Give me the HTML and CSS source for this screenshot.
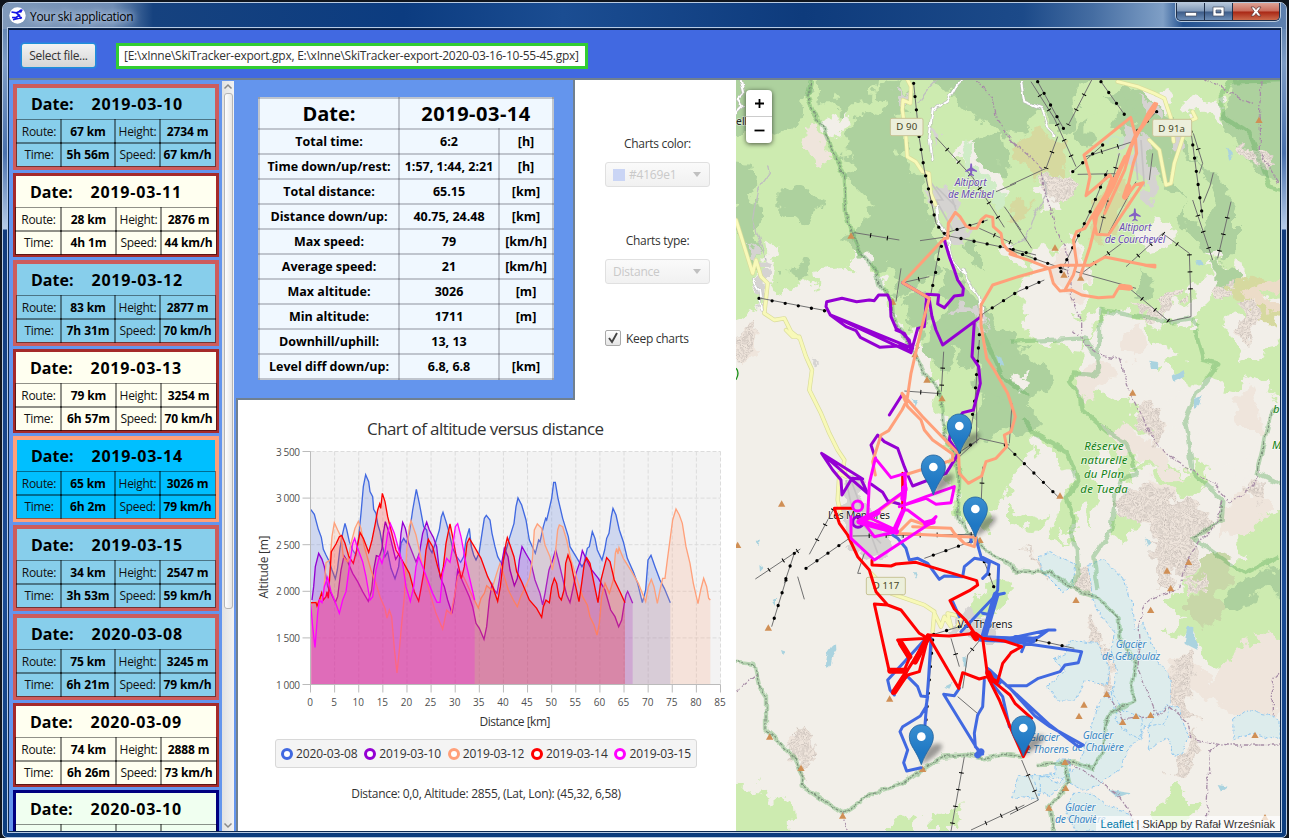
FILE: index.html
```html
<!DOCTYPE html>
<html lang="en">
<head>
<meta charset="utf-8">
<title>Your ski application</title>
<link rel="stylesheet" href="styles.css">
</head>
<body>
<div class="window">
  <header class="titlebar">
    <svg class="app-icon" width="17" height="17" viewBox="0 0 17 17"><circle cx="8.5" cy="8.500" r="8.200" fill="#fff"/><path d="M11 3.500l2.500-.5M2.500 5l5 .8 3.300-1.600M7.500 6l2.800 2.300-3.500 2.400M4 12.800l9-2.300M3 10.500l4 .2M9.500 8.300l3 3.500" stroke="#1414e6" stroke-width="1.700" fill="none"/><circle cx="11.400" cy="4.200" r="1.500" fill="#1414e6"/></svg>
    <span class="title">Your ski application</span>
    <div class="caption-buttons">
      <span class="cap"><svg width="12" height="12"><rect x="0.500" y="6.500" width="11" height="3.500" fill="#fff" stroke="#444c60" stroke-width=".7"/></svg></span>
      <span class="cap"><svg width="13" height="12"><path d="M1 1h11v9H1zM4 4v3h5V4z" fill="#fff" fill-rule="evenodd" stroke="#444c60" stroke-width=".7"/></svg></span>
      <span class="cap cap-close"><svg width="12" height="12"><path d="M1 1h3l2 2.600L8 1h3L7.800 5.500 11 10H8L6 7.400 4 10H1l3.200-4.500z" fill="#fff" stroke="#5a3030" stroke-width=".7"/></svg></span>
    </div>
  </header>
  <div class="client">
    <div class="toolbar">
      <button class="select-file">Select file...</button>
      <div class="path-field">[E:\xInne\SkiTracker-export.gpx, E:\xInne\SkiTracker-export-2020-03-16-10-55-45.gpx]</div>
    </div>
    <div class="body">
      <aside class="sidebar">
        <div class="cards" id="cards"></div>
        <div class="scrollbar">
          <svg width="12" height="11"><path d="M2.500 7.500L6 4l3.500 3.500" fill="none" stroke="#8a8a8a" stroke-width="1.500"/></svg>
          <div class="thumb"></div>
          <svg class="down" width="12" height="11"><path d="M2.500 3.500L6 7l3.500-3.500" fill="none" stroke="#8a8a8a" stroke-width="1.500"/></svg>
        </div>
      </aside>
      <main class="center">
        <div class="upper">
          <section class="summary"><table class="stats" id="stats"></table></section>
          <section class="controls">
            <label>Charts color:</label>
            <div class="combo"><i class="swatch"></i><span>#4169e1</span><b class="arrow"></b></div>
            <label>Charts type:</label>
            <div class="combo"><span>Distance</span><b class="arrow"></b></div>
            <div class="check"><span class="box"><svg width="12" height="12"><path d="M2 6l3 4 5-9" stroke="#444" stroke-width="1.900" fill="none"/></svg></span>Keep charts</div>
          </section>
        </div>
        <section class="chart-panel">
          <svg class="chart" id="chart" width="498" height="335" viewBox="238 400 498 335"></svg>
          <div class="legend" id="legend"></div>
          <div class="readout">Distance: 0,0, Altitude: 2855, (Lat, Lon): (45,32, 6,58)</div>
        </section>
      </main>
      <section class="map">
<svg class="map-canvas" width="544" height="751" viewBox="0 0 1632 2253">
<defs>
<pattern id="scree" width="22" height="20" patternUnits="userSpaceOnUse"><path d="M2 4l5-2M11 3l4 4M5 10l-3 5M9 12l6-1M18 9l2 6M13 17l5 1M7 18l2-3" fill="none" stroke="#bdb4ae" stroke-width="3"/></pattern>
<linearGradient id="pin" x1="0" y1="0" x2="0" y2="1"><stop offset="0" stop-color="#3a8fd0"/><stop offset=".7" stop-color="#1f78c4"/></linearGradient>
<filter id="soft" x="-30%" y="-30%" width="160%" height="160%"><feGaussianBlur stdDeviation="6"/></filter>
<filter id="organic" filterUnits="userSpaceOnUse" x="-60" y="-60" width="1752" height="2373"><feTurbulence type="fractalNoise" baseFrequency=".018" numOctaves="4" seed="7"/><feDisplacementMap in="SourceGraphic" scale="85" xChannelSelector="R" yChannelSelector="G"/></filter>
<filter id="wobble" filterUnits="userSpaceOnUse" x="-60" y="-60" width="1752" height="2373"><feTurbulence type="fractalNoise" baseFrequency=".03" numOctaves="2" seed="3"/><feDisplacementMap in="SourceGraphic" scale="20" xChannelSelector="R" yChannelSelector="G"/></filter>
<g id="marker"><path d="M0 0L12-42Q40-72 62-60Q66-38 0 0" fill="#333" opacity=".45" filter="url(#soft)"/><path d="M0 0C-16-46-36-56-36-84C-36-104-20-120 0-120S36-104 36-84C36-56 16-46 0 0z" fill="url(#pin)" stroke="#23649f" stroke-width="2.500"/><circle cy="-84" r="13" fill="#fff"/></g>
<path id="peak" d="M-11 9L0-10 11 9z" fill="#d08f55"/>
<path id="plane" d="M-2-16Q0-20 3-16L4-5 18 4v4L4 4 3 13l6 5v3l-8-3-8 3v-3l5-5-1-9-14 4V4L-3-5z" fill="#8461c4"/>
</defs>
<rect width="1632" height="2253" fill="#f2efe9"/>

<g filter="url(#organic)">
<!-- meadows -->
<g fill="#cdebb0">
<path d="M-50-50H1690V640L1610 650 1560 720 1480 700 1440 760 1370 720 1350 760 1310 700 1230 720 1110 700 1060 780 1020 860 1040 930 1130 900 1160 960 1200 1010 1240 1060 1180 1080 1200 1200 1150 1210 1110 1090 1060 1150 1090 1250 1060 1370 1050 1250 1010 1230 1000 1170 960 1140 950 1100 900 1090 850 1170 760 1330 690 1340 650 1250 640 1120 600 960 580 850 620 800 560 780 500 760 470 720 460 640 400 530 380 480 350 490 355 560 240 575 245 620 210 600 165 625 120 640 105 600 120 500 90 480 95 540 50 600 70 690 -50 730z"/>
<path d="M1230 720l150 30 30-40 70 40 30 80 60 20 20-60 100-10v240l-128-40 30 50-60 10-40-80-60 40-10-70-100-30-50-50 60-20-70-30z"/>
<path d="M1250 1120l100 60 60-40 10 60-60 60-90-20-10-70-80-10zM1000 1210l60-50 20 60-70 60 10 80-40-20 30 60-70-20zM1130 1330l70-50 10 60-60 60zM1500 1350l120-60 72 10v260l-150-80-40-60zM822 1280l60 30 60-20-40 60-80-20z"/>
<path d="M1290 1560l60-50 60-60 282-20v290l-110-30-10 90-60 20-30 60-20-50 40-40-80-20-40-70-100-30 60-30z"/>
<path d="M-50 2110l110 10 40 50 60-10 10 150H-50zM450 2240l40-30 50-10-10 110h-80zM590 2180l50 10 50-20-30 80h-70zM1290 2120l30-20 30 50 40 10-40 93h-80zM710 1560l60-60 30-10 40 50-60 60-80 20z"/>
</g>

<!-- bare rock and clearings -->
<g fill="#f2efe9">
<path d="M265 120l60-35 10 25-30 50-30 10-15-30zM1190 35l60-15 60 20-10 60-80-20-30 10zM640 210l40-30 80 60 50 80-10 30-60-50-60-50zM890 330l40-30 50 80-60 10zM880 560l40-60 50 20 40-50 30 60 30 120-80 60-80 20-60-60zM850 690l110 0 120 30-40 90-130-20-70-50zM790 510l60-10 20 50-60-10zM1210 470l50-50 60 20-20 60-60 10zM1270 700l90-40 60-100 50 10-30 80-100 90zM1430 430l30 80-10 40-30-20zM1480 560l30-20 20 60-70 30zM1300 950l90-50 110 30 90-50 40 120-60 80-30 120-110-60-50-80zM1110 880l100-40 60 20-40 120-110-20-40-50zM820 870l50-20 10 40-40 10zM1230 1060l70-20 60 60-30 20zM1340 60l60-20 60 30-10 60-60-30-50-10zM1480 40l60 30-30 40z"/>
</g>
<g fill="#efe5dc">
<path d="M200 160l50-20 20 60 20 30-60 15-15-40zM960 520l60-20 20 60 20 80-50 20-50-50-30-20zM1160 760l60-20 20 50-50 50-40-30zM1010 890l60-40 60 10-30 80-60 10zM1100 1040l70-20 50 60 60 20 20 60 60 30-60 10-80-60-60-20zM1490 960l60-30 20 60 0 60-60 0zM1240 1200l60 10 30 70-60 50-40-60zM1460 1270l60-10 50-40 40 60-60 60-90 40zM1290 1740l60 0 80 60 60-80 90-70 92 30v200l-110 40-80-20-90-40zM-20 800l60-60 20 30-10 60-50 20z"/>
</g>

<!-- woods -->
<g fill="#add19e">
<path d="M20-40h205l-15 130-40 50-60 20-60-10L-40 185V50zM240-40h185l-5 95-60 15-40 25-30-25-45 0zM430 20l70-20 10 90-60 50zM325 145l80-60 80 20 20 80-10 40 60 70 20 70 10 100 30 60-20 60-95 60-45-70-60-30-60-60 30-40 5-40 60-30-40-25-60-60 10-35z"/>
<path d="M545-40h560l-90 100 10 120 30 20 30-60 60-100 80-20 60 60 30 50 60 90 80 70 20 120-60-10-80-110-60-20-70-80 0-70-60-40-60 20-80 60-50-20-60-40-40 60-60-10-60-20-60-60-60-60-60-30-50 0z"/>
<path d="M130 330l50-10 75 30-10 50-55 30-40-30-20-20zM-30 240l90 5-15 80 25 75-10 70 15 70-25 40-25-80-25-60zM175 565l40-10 5 30-30 20zM120 585l20 0-5 15zM700 200l100-60 10 140-40 0zM610 560l50 10 90 110 30 60 100 60-30 30 10 160-50 60-60 30-60-70-60-140-60-60 20-60 40-80zM500 650l60-20 20 90-20 70-40-30zM680 500l40-5 20 30 30-5-10 30-70 10z"/>
<path d="M1500-40h180v390l-108-60-60-90-60-70zM1110 40l70 20 30 90 60-10 60 90 120 60 50 110 0 100-40 40-50-30-80-60 20-80-70-70-60-60-80-90zM1420 560l60-20 30 60-30 30-60-30z"/>
<path d="M822 820l60 20 60 20 20 60-60 10-10 50-68 20-60-60-40-80 20-60zM640 760l40-20 30 50 0 80-60-50zM1450 1590l30-70 90-40 112-30v90l-90 0-50 30zM1200 645l20-90 40 60-20 40zM822 1000l60-20 40 40-50 40-50 10z"/>
</g>
<g fill="#cdebb0"><path d="M620 290l30-20 60 30 80 60 30 70-40 60-90-50-60-70zM1090 60l60 20-20 90-70-10 0-50zM640 800l40 60 30-10 20 110-30 120-60-20-10-120zM720 470l60 50 0 40-60-30zM1330 200l60 40 40 90-20 130-50-60-40-100z"/></g>
<g fill="#f2efe9"><path d="M823 880l50-6 6 30-40 14z"/></g>
<g fill="#d6d99f"><path d="M830 195l40-35 60 5 60 30-20 90-60 0-80-30zM1080 350l70-60 30 60-80 140-40-30 20-60zM1490 600l50-20 60 30-60 30 90 60-20 60-90-80zM840 380l40 0-20 60-60-20z"/></g>
<g fill="#c8d7a8"><path d="M1400 1440l80-20 20 70-90 60-40-20zM1350 1560l60-40 60 70-60 60-60-40z"/></g>
<g fill="#ecdcc8"><path d="M1530 625l60-25 72 10v20l-90 10 60 40v20l-90-40z"/></g>
<path d="M1050 200l70-20 60 10 0-20-60 0z" fill="#c7e6c2"/><path d="M690 180l20 70 90 90-10 60-90-120-35-60z" fill="#cfecc6"/>

<!-- settlements -->
<g fill="#d5d3d1"><path d="M575 310l60 20 30 60 30 60 0 50-30-20-20-60-60-60zM590 130l20 40-20 40zM495 30l15 40-20-20zM45 480l30 60 30 10-20 30-40-60zM60 570l25 20-10 100-20-60zM1190 150l50 20 20 120-10 100-30-50-20-90-60-60zM1210 45l60 20 20 60-60-30zM1290 150l60-20-20 90-40 0zM640 670l80 10 40 70-60-50zM325 1200l60 10 20 120 60 60-40 60-70-40-40-100zM620 1640l80-50 90 40-20 70-60-20zM230 835l15 20-20-5z"/></g>

<!-- scree -->
<g id="scree-fields"></g>
</g>
<path d="M580 300l40 60-20 0 50 90M600 320l60 60M640 330l20 60M1195 180l10 120M1215 180l10 140M330 1200l30 140M345 1200l80 220M375 1330l60 60" stroke="#c5c3c3" stroke-width="5" fill="none"/>

<!-- glaciers and lakes -->
<g fill="#ddecec" stroke="#92c8ef" stroke-width="3" stroke-dasharray="10 6" filter="url(#wobble)">
<path d="M910 1430l30-10 80 35-10 60-30 20-60-60zM1055 1450l50-10 60 60 20 60 10 90 30-20 20 60 20 50 40 60 0 70-20 60-60 10-10 40-60-30-20-60-10-60 20-60-20-60 10-50-60-80zM1000 1680l80 10 40 70-10 60-60-20-30 60-60 0-30-40 60-50-40-30 40-20zM1090 1860l40-30 30 60 50 20 10 50-50 60-10 40-80 60-40 10-80-40-50 0 0 70-80-10 20-60 80 0 40 20 60-60zM890 2090l70-10 0-40 40 0 0 60-60 50-40-20zM1010 2140l60 0 50 40 60 20 20 53h-180l-30-60zM1240 1930l50-60 40 20 30 90-40 50-30-60-50 40zM1490 1920l40-30 60 10 42 20v60l-80-20-60 20z"/></g>
<g fill="#aad3df" filter="url(#wobble)"><path d="M300 1690q-28 20-30 60 2 20 15 0 0-20 16-40zM1240 845l30 5-5 20-20 0zM1310 890l30-20 5 20-30 15zM1380 960l20-10-8 25-12 5zM1225 1370l20 20-10 10zM1355 1640l20 0 0 40 10 30-40-20zM1120 2130l70 10-40 15zM625 1820l25-12-10 18zM680 1730l15-5-3 35-12-5zM780 820l15 10 10 30-15-5zM530 950l15 10-10 20zM1380 540l15 0 10 20-20-5zM65 1385l10 0-5 14zM70 1455l12 10-10 10zM135 1710l15 5-10 10zM110 1560l10-5 0 20zM490 1370l12 0-5 14zM530 1480l10 0-4 16zM1445 2112l30 5-20 15zM1468 200l20 25-8 15z"/></g>

<!-- roads -->
<g fill="none" stroke-linejoin="round" stroke-linecap="round">
<g stroke="#d9dc9a" stroke-width="13"><path d="M515 0l10 20-2 50-22-10-2 30 10 70 5 70 25 15 20 30 20 5 5 60 15 35M0 420l50 160 10-40 15 50 20 20-10 90 30 20 30-5 20 40 25 20M150 750l20 20 20 0 20 60 18 40-8 60 35 70 25 60 25 50 20 30-3 20 8 30-20-10-5 80 10 50M1145 5l60 15 50 20 30 15 20 60 8 70M1240 180l30 30 20 105 15-5 10-60 20-60 20-65 25-10-10-20M405 1480l60 60 100 35 30 20-5 60M595 1600l20 40 10-30 20 30-10-40 40 10-10 30 20 0"/></g>
<path d="M515 0l10 20-2 50-22-10-2 30 10 70 5 70 25 15 20 30 20 5 5 60 15 35M0 420l50 160 10-40 15 50 20 20-10 90 30 20 30-5 20 40 25 20M150 750l20 20 20 0 20 60 18 40-8 60 35 70 25 60 25 50 20 30-3 20 8 30-20-10-5 80 10 50M1145 5l60 15 50 20 30 15 20 60 8 70M1240 180l30 30 20 105 15-5 10-60 20-60 20-65 25-10-10-20M405 1480l60 60 100 35 30 20-5 60M595 1600l20 40 10-30 20 30-10-40 40 10-10 30 20 0" stroke="#f8f9b8" stroke-width="9"/>
<g filter="url(#wobble)"><path d="M680 0l-20 20-25 45-45 25-10 80 10 70M600 375l5 50 30 50 10 60 40 50-5-20 10 30 40 60 10 60M50 600l20 30 5 60M15 0l10 40-20 20 15 20-20 20M855 5l10 60 50 20 20 60 20 20" stroke="#b8b8b8" stroke-width="9"/>
<path d="M680 0l-20 20-25 45-45 25-10 80 10 70M600 375l5 50 30 50 10 60 40 50-5-20 10 30 40 60 10 60M50 600l20 30 5 60M15 0l10 40-20 20 15 20-20 20M855 5l10 60 50 20 20 60 20 20" stroke="#fff" stroke-width="6"/>
<path d="M95 255l5 25-35 50-15 90 20 60 20 60M605 0l-30 30-30 40M922 280l10 60-40 70-20 60-50 30" stroke="#bfbfbf" stroke-width="4"/></g>
</g>

<!-- reserve and administrative boundaries -->
<g fill="none" stroke-linejoin="round" filter="url(#wobble)">
<g stroke="#5aac5a" opacity=".38" stroke-width="13">
<path d="M225-20v20l-10 55 20 45 27 45 23 55 37 80 8 120 15 55 30 65 45 50 15 50 35 40 5 60 60 100 30 60 45 50 15 140 35 60 10 60-5 120 25 45 50 45 100 72 100 5 85 55 60 20 60 60 5 60 50 75-15 75 10 40-68 35-17 35-10 80-30 55-55-20-110 5M985 2045l15 65-60 70 15 93"/>
<path d="M-20 1745h20l55 7 15 68 20 30 0 100 75 70 35 70 0 30 120 80 90-60 90-30 60-40 60-40 70-5 50 10 60-12 60 8"/>
<path d="M1092 750l-10 75 5 45-15 15-60-5-10 25 30 45 5 40 85 70 50 30 30 95-50 15-15 50-10 100-55 80 15 100M822 785l225-10 40 65M862 1015l40 50 90 50 35 85-35 55 20 55-5 60 15 40 5 70-25 45M1377 750l25 90 45 10-65 90-35 80 25 160 90 85-5 55-85 55 150 105 105-50M1627 980l-25 30-40 168 87 40M1649 0l-167 5-25 45 5 60 80 50 60 160 47 12M1092 780l0-80 5-10 105 20 100 15 65-10 20 25M740 760l60 130 80 60"/></g>
<g stroke="#7c927c" stroke-width="3.500" stroke-dasharray="9 4"><path d="M225-20v20l-10 55 20 45 27 45 23 55 37 80 8 120 15 55 30 65 45 50 15 50 35 40 5 60 60 100 30 60 45 50 15 140 35 60 10 60-5 120 25 45 50 45 100 72 100 5 85 55 60 20 60 60 5 60 50 75-15 75 10 40-68 35-17 35-10 80-30 55-55-20-110 5M985 2045l15 65-60 70 15 93M-20 1745h20l55 7 15 68 20 30 0 100 75 70 35 70 0 30 120 80 90-60 90-30 60-40 60-40 70-5 50 10 60-12 60 8M1627 980l-25 30-40 168M1460 1265l-5 55-85 55"/></g>
<g stroke="#a78da7" stroke-width="4" stroke-dasharray="14 5 4 5"><path d="M720 5l50 45 10 60 60 90M822 182l100 80 0 60 20 60 15 60 30 60 10 60 10 90 30 70 0 40M1010 750l80 75 60 10 40 120 50 100 40 60 150 95 50 55 70-45 20-50M1405 0l60 30 90 45M1575 0l-5 110 0 100 60 100M1460 1265l-20 70-50 50-40 60-20 80-90 30-30 60 5 60-10 90 60 140 30-30 60 50 10 50 110 20 160 0M1450 1990l-30 30-10 230M1112 1840l40 60 10 20 100-15M987 2045l60 30 100 70 60 90 50 30M320 2200l10 50M0 1835l60-50M1632 1780l-20 20 0 110"/></g>
</g>
<path d="M0 865q12 12 0 34" fill="none" stroke="#189018" stroke-width="4"/>

<!-- lifts -->
<g fill="none" stroke="#707070" stroke-width="3">
<path d="M533 10l17 165 15 95 35 160 25 35 215 45 60 15M75 655l200 38M615 480l-30 160M625 460l130-40M822 510l170 60M905 5l80 145M1095 5l70 98M1100 195l-90 80M1262 95l-60 60M1365 155l35 260M735 705l110-70 80-35M975 575l90-185 50-120M730 780l-15 210-15 80M670 1117l60-40M808 1095l160 157M705 1385l-140 50M210 1465l130-90M150 1500l-43 140M175 1420l-30 90M590 1680l-20 240M670 1640l-100 30M900 1680l115 25M745 1445l30 80"/>
<path d="M355 458l135 22M552 482l70-10M600 172l110 120 95 150M840 310l-60 25M730 445l100 45M805 380l50 70M495 565l-15 100M500 608l80-18M623 815l-7 120M505 933l110 8M220 1423l75-140M58 1497l135-90M185 1490l20 68M375 1480l-10 0 20-60M350 1368l365-5M740 1160l-5 120M722 930l0 160M820 1090l8-120M665 1135l65-60 90 20M645 1675l25 85M740 1670l-45 55-15 100M665 1850l65 55M685 2030l-40 223M705 2250l160-75M1067 0l-70 135M885 5l70 110 65 145M965 170l-35 95-108 50M1050 230l140-45M1025 283l120-2M1090 460l60-240M1115 465l85-160M1250 220l-10 80M1372 160l28 90-10 30M1432 278l-10 40-20 50M1370 360l60 180M1485 365l-40 170M1170 560l110-100 80 60 5 150 0 40-70 15M1180 625l120 100M1037 580l120-90M822 405l65 100M857 2040l50 120-85 43M1020 575l180 50"/>
</g>
<g fill="none" stroke="#000" stroke-width="10" stroke-linecap="round"><path stroke-dasharray="0 40" d="M533 10l17 165 15 95 35 160 25 35 215 45 60 15M69 655l200 38M625 460l-40 180M625 460l130-40M822 510l170 60M905 5l80 145M1095 5l70 98M1100 195l-90 80M1262 95l-60 60M1365 155l35 260M735 705l110-70 80-35M975 575l90-185 50-120M730 764l-15 210-15 80M670 1117l60-40M808 1095l160 157M705 1385l-140 50M210 1465l130-90M150 1500l-43 140M175 1420l-30 90M590 1680l-20 240M670 1640l-100 30M900 1680l115 25M745 1445l30 80"/></g>
<g fill="none" stroke="#000" stroke-width="14" stroke-dasharray="0 48 3 0"><path d="M355 458l135 22M600 172l110 120 95 150M730 445l100 45M500 608l80-18M623 815l-7 120M505 933l110 8M220 1423l75-140M58 1497l135-90M350 1368l365-5M740 1160l-5 120M645 1675l25 85M740 1670l-45 55M685 2030l-40 223M705 2250l160-75M1067 0l-70 135M885 5l70 110 65 145M965 170l-35 95M1050 230l140-45M1090 460l60-240M1372 160l28 90M1432 278l-10 40M1370 360l60 180M1485 365l-40 170M1170 560l110-100 80 60 5 150M1180 625l120 100M1037 580l120-90M857 2040l50 120"/></g>

<g id="peaks"></g>
<use href="#plane" x="705" y="268"/><use href="#plane" x="1196" y="403"/>

<!-- place labels -->
<g class="lbl" text-anchor="middle">
<g class="air"><text x="704" y="319" textLength="96">Altiport</text><text x="705" y="354" textLength="138">de Méribel</text><text x="1198" y="454" textLength="96">Altiport</text><text x="1197" y="489" textLength="182">de Courchevel</text></g>
<g class="res"><text x="1104" y="1109" textLength="118">Réserve</text><text x="1104" y="1152" textLength="140">naturelle</text><text x="1104" y="1195" textLength="120">du Plan</text><text x="1104" y="1238" textLength="142">de Tueda</text><text x="1621" y="999">b</text><text x="1622" y="1106">M</text></g>
<g class="ice"><text x="1185" y="1705" textLength="92">Glacier</text><text x="1185" y="1741" textLength="174">de Gébroulaz</text><text x="1086" y="1978" textLength="92">Glacier</text><text x="1086" y="2014" textLength="156">de Chavière</text><text x="925" y="1984" textLength="92">Glacier</text><text x="925" y="2019" textLength="146">de Thorens</text><text x="1033" y="2193" textLength="92">Glacier</text><text x="1033" y="2229" textLength="152">de Chavière</text></g>
<g class="town"><text x="369" y="1317" textLength="186">Les Menuires</text><text x="747" y="1644" textLength="164">Val Thorens</text><text x="17" y="135">ell</text></g>
</g>
<g class="road-sign" text-anchor="middle">
<rect x="463" y="115" width="98" height="52" rx="5"/><text x="512" y="151" textLength="63">D 90</text>
<rect x="1250" y="118" width="117" height="51" rx="5"/><text x="1307" y="155" textLength="80">D 91a</text>
<rect x="391" y="1492" width="117" height="52" rx="5"/><text x="450" y="1528" textLength="80">D 117</text>
</g>

<!-- GPS tracks -->
<g class="tracks">
<g stroke="#4169e1">
<path d="M470 1365l15 10 25 30 10 35 25-5 30 15 35 48 15-10 55 2 5-30 30-25 30 5 15 10-5 30-15 15M718 1370l17 60 53 25-3 75-5 10-35 130M705 1370l0 15M805 1540l-25 5-105 110M740 1600l25 5M650 1565l20 45M570 1675L455 1800l7 30 13 15M585 1675l-7 115-11 145M515 1790l30 30 10 28 20 2M575 1850l-5 30-17 28-53 32-8 15 23 55-12 38 9 25 43-10M670 1825l-15 22-32-4 110 179M745 1800l-5 80-15 25-10 55 3 40 22 22M755 1765l67 60 75 83 45 32 100 55-15 5-85-65-120-110M760 1800l40 50 20 90M735 1670l87 5 115-25 20 0-20 0-30 22-40 8-40 5 210 30-10 33-40 7-15 20-65 20-35 22h-60M822 1680l45 10-10 25"/>
<path d="M735 1675l105 5M840 1675l50 5M780 1545l-35 120M735 2015l-10 10M758 1775l30 30" stroke-width="20"/></g>
<g stroke="#9400d3">
<path d="M625 480l15 50 15 40 10 30 17 25-2 20-25 3-30 35-20-11 3-27-36-2-7 97-20 5-20 73M525 818l-5-38-25-25-15-10-15-35-2-45-8-20-27 0-13 17-15-2-38 5-44-10-46 10-2 15 13 25 47 35 30 12 13 20 59 30 68-5 25 21-242-113 247 100-25-45-25-10M580 660l8 50 12 40 20 45 115-85M715 725l-7 105 20 30 5 50-21 80-32 8-35 52-5 30 28 40-38 60-100 38-15-33-10-25-20-55-40-20-20-20-20 30 13 40M498 945l-38 60M257 1120l138 120-20-43-27-2-30 50-3-45-25-30zM260 1122l120 75M405 1212l35 25 15 25 35 10M500 608L580 655"/><circle cx="366" cy="1326" r="16"/></g>
<g stroke="#ffa07a">
<path d="M840 525l-25-15-15-20-5-30-23-20-2-28-20-5-15 13-13 25-17 0-15-7-18-28-14-13-21 33-2 45-10 0-125 133 80 47-15 55-17 70-23 100-12 80-15 30-40 62-23 13-25 80 8 40M498 940l17 40 40 40 10 30 25 30 60 42 0 18-135 42M498 940l62 70 108 112 2 58 27 30 40-22 13-43 30-10 32-35-7-35 20-10 13-45-23-70-40-70-23-35-7-40-10-60 0-60 35-60 70-23 67-19 65-17h90l45-25 150 30-30-5h30M822 522l60 20 58 23 12 45 20 23 35-3 30 15 50 8 45-3 15-25 40 0M987 630l25-45 10-35-10-70 10-25 25-10 20-35 65-105-10-20-72 62 12-57-18-65 140-113 14 53-36 85-30 70-50 90-5 30-15 60-28 85M1198 165l64-93-10 23-54 75 4 50-10 30-25 105 30-40 25-7-105 157-35-2-10-53 60-105 35-75M1262 72l-6-2-20 30-50 100-20 70-60 130M400 1310l80 50 240 12-5 28-30-10-30-30-10-15-115-5M485 1360l40-40 45 15M380 1330l120-90"/><path d="M1167 350l10-30M1155 620l25 3M1130 300l-15 40" stroke-width="18"/></g>
<g stroke="#f00">
<path d="M350 1285l-55 0 15 45 25 35 30 65 35 40 20 65 35 40-40-3 45 203 45-5 15-35-35-55 90-5-105 165 45-55 35-10 25-100-25-15-55-70-40-15M408 1440l0 15 57 3 15-6 60-5 182 55 3 13-25 17-58 30 13 25 35 35 30 45M575 1665l65 3 80-8 20 15 15 115 30 15 15-55 20-25 5-7 32-18-52-17-65-8M575 1665l93 160 12-47 50 19 25-7 67 55 15 25 50 45M755 1790l35 70 32 80 40 90 15-30M500 1180l0 110"/>
<path d="M475 1835l30-45M577 1670l-40 75M495 1690l25 40M710 1660l10 15M757 1780l10 20M463 1772l45 0" stroke-width="18"/></g>
<g stroke="#f0f">
<path d="M418 1135l47 58 43-13-3 110-25 60-65-30-20-10 5-100zM380 1325l130-95-5-50M490 1280l80-30 85-30-10 48-45 5-30-18-80 25M380 1325l90 30 30-65 15 0 60 45 25-25-10 15-175 115-70-65 0-65M385 1330l30 40 65-15"/><path d="M370 1325l110 30M375 1322l50-25M505 1225l-3 30M570 1330l20-5" stroke-width="18"/><circle cx="365" cy="1278" r="15"/></g>
</g>
<use href="#marker" x="670" y="1122"/><use href="#marker" x="592" y="1245"/><use href="#marker" x="718" y="1371"/><use href="#marker" x="556" y="2054"/><use href="#marker" x="862" y="2028"/>
</svg>
        <div class="zoom-ctl"><a><svg width="11" height="11"><path d="M5.500 1v9M1 5.500h9" stroke="#000" stroke-width="1.800"/></svg></a><a><svg width="11" height="11"><path d="M.5 5.500h10" stroke="#000" stroke-width="1.800"/></svg></a></div>
        <div class="attribution"><a>Leaflet</a> | SkiApp by Rafał Wrześniak</div>
      </section>
    </div>
  </div>
</div>
<script src="app.js"></script>
</body>
</html>
```

FILE: styles.css
```css
* { box-sizing: border-box; }
body { margin: 0; width: 1289px; height: 838px; overflow: hidden; background: #10151d; font-family: "Open Sans", "Noto Sans", sans-serif; font-size: 12px; color: #333; }
.window {
  width: 1285px; height: 836px; margin-top: 2px; margin-left: 2px; padding: 0 6px 6px 6px;
  border: 1px solid #b9cbe2; border-radius: 7px 7px 5px 5px;
  background: linear-gradient(#5377a5 0, #7d9cc4 60px, #4a71ad 150px, #b5cbe8 226px, #123b7c 227px, #1c4c95 70%, #0c3c7d);
  display: flex; flex-direction: column;
}
.titlebar { height: 26px; margin: 0 -6px; padding-left: 6px; display: flex; flex: none; align-items: flex-start; border-radius: 6px 6px 0 0; background: linear-gradient(90deg, #7f99ba 0, #6e8cb4 110px, #16427f 150px, #0c3c80 400px, #1b4d92 560px, #0e3b7c 800px, #1c4a89 1020px, #456da2 1090px, #7f9fc6 1160px, #245291 1180px, #5e80ae); }
.app-icon { margin-top: 4px; }
.title { margin: 5px 0 0 4px; line-height: 17px; color: #000; text-shadow: 0 0 6px #dce8f8, 0 0 10px #c8d8ee; letter-spacing: -.3px; }
.caption-buttons { margin-left: auto; margin-right: 6px; height: 18px; display: flex; border: 1px solid #20304a; border-top: 0; border-radius: 0 0 5px 5px; overflow: hidden; box-shadow: 0 0 0 1px #b8cade; }
.cap { width: 28px; display: flex; align-items: center; justify-content: center; border-right: 1px solid #20304a; background: linear-gradient(#b5c6da, #7f98b8 48%, #3c5b88 52%, #6c8db6); }
.cap-close { width: 46px; border: 0; background: linear-gradient(#dda295, #c96c5c 48%, #a92614 52%, #cb6a4c); }
.client { flex: 1; min-height: 0; display: flex; flex-direction: column; border-top: 1px solid #0a1a3a; box-shadow: 0 0 0 1px #0d2850, 0 0 0 2px #b8cbe4; background: #6495ed; }
.toolbar { height: 50px; border-bottom: 2px solid #708090; background: #4169e1; display: flex; align-items: center; gap: 20px; padding: 3px 0 0 12px; flex: none; }
.select-file { width: 75px; height: 25px; padding: 0; border: 1px solid #1e90d8; border-radius: 3px; box-shadow: 0 0 2px #1aa5e8; background: linear-gradient(#f2f2f2, #d6d6d6); font: inherit; color: #333; letter-spacing: -.3px; }
.path-field { height: 26px; width: 472px; border: 3px solid #32cd32; background: #fff; line-height: 20px; padding-left: 5px; white-space: nowrap; letter-spacing: -.255px; overflow: hidden; }
.body { flex: 1; min-height: 0; display: flex; }
.sidebar { width: 227px; padding-left: 4px; display: flex; gap: 3px; flex: none; }
.cards { width: 206px; padding-top: 4px; display: flex; flex-direction: column; gap: 3px; overflow: hidden; }
.card { flex: none; width: 206px; height: 86px; border: 4px solid #cd5c5c; background: #87ceeb; color: #000; }
.card-selected { border-color: #ffa07a; background: #00bfff; }
.card-alt, .card-new { height: 84px; border-width: 3px; border-color: #a52a2a; background: #fffff0; }
.card-new { border-color: #000080; background: #f0fff0; }
.card-head { height: 32px; padding-left: 14px; line-height: 32px; font-size: 16px; font-weight: 700; display: flex; gap: 18px; }
.card-head span + span { letter-spacing: .8px; }
.card-grid { display: grid; grid-template-columns: 44px 54px 45px 55px; grid-auto-rows: 23px; }
.card-alt .card-grid, .card-new .card-grid { grid-template-columns: 45px 55px 45px 55px; }
.card-grid span, .card-grid b { line-height: 23px; text-align: center; box-shadow: 0 0 0 1px rgba(0,0,0,.43); letter-spacing: -.3px; white-space: nowrap; color: #111; }
.card-grid b { color: #000; letter-spacing: -.1px; }
.scrollbar { width: 12px; margin: 1px 0 0; display: flex; flex-direction: column; background: linear-gradient(90deg, #e2e2e2, #f2f2f2); }
.thumb { width: 9px; height: 516px; margin: 1px auto 0; border: 1px solid #b5b5b5; border-radius: 3px; background: linear-gradient(90deg, #fff, #e6e6e6); }
.down { margin-top: auto; }
.center { width: 500px; flex: none; display: flex; flex-direction: column; background: #fff; }
.upper { display: flex; height: 320px; flex: none; }
.summary { width: 339px; border-right: 2px solid #708090; border-bottom: 2px solid #708090; background: #6495ed; padding: 17px 0 0 22px; }
.stats { width: 294px; table-layout: fixed; border-collapse: collapse; background: #f0f8ff; color: #000; font-weight: 700; text-align: center; }
.stats td { height: 25px; padding: 0; border: 2px solid rgba(60,60,75,.27); line-height: 20px; font-size: 12.5px; white-space: nowrap; }
.stats .big td { height: 31px; font-size: 20px; }
.stats .big td + td { letter-spacing: .5px; }
.stats .c1 { width: 140px; } .stats .c2 { width: 100px; } .stats .c3 { width: 54px; }
.controls { flex: 1; display: flex; flex-direction: column; padding: 55px 0 0 30px; letter-spacing: -.3px; }
.controls label { width: 105px; text-align: center; line-height: 18px; margin-bottom: 9px; }
.combo { width: 105px; height: 25px; margin-bottom: 45px; padding: 0 8px 0 7px; border: 1px solid #e0e0e0; border-radius: 3px; background: linear-gradient(#fafafa, #f1f1f1); color: #c9c9c9; display: flex; align-items: center; letter-spacing: -.2px; }
.swatch { width: 12px; height: 12px; margin-right: 4px; background: #cad5f5; }
.arrow { margin-left: auto; border: 4px solid transparent; border-top: 5px solid #c0c0c0; border-bottom: 0; }
.check { display: flex; align-items: center; gap: 5px; height: 18px; }
.box { width: 16px; height: 16px; border: 1px solid #a9a9a9; border-radius: 2px; background: linear-gradient(#fff, #e4e4e4); display: flex; align-items: center; justify-content: center; }
.chart-panel { flex: 1; min-height: 0; border-left: 2px solid #708090; display: flex; flex-direction: column; align-items: center; }
.chart { display: block; flex: none; }
.chart text { fill: #333; font-size: 12px; }
.chart .tick { font-size: 10px; fill: #505050; }
.legend { width: 422px; height: 29px; margin: 4px 0 0 -2px; padding: 0 5px; border: 1px solid #d8d8d8; border-radius: 3px; background: #f4f4f4; display: flex; align-items: center; justify-content: space-between; white-space: nowrap; letter-spacing: -.1px; }
.legend span { display: flex; align-items: center; gap: 3px; }
.legend i { width: 12px; height: 12px; border: 3px solid; border-radius: 50%; background: #fff; }
.readout { margin-top: 17px; line-height: 18px; letter-spacing: -.3px; margin-left: -2px; }
.map { position: relative; width: 544px; flex: none; overflow: hidden; }
.map-canvas { display: block; }
.tracks { fill: none; stroke-width: 9; stroke-linejoin: round; stroke-linecap: round; }
.lbl text { font-family: "Noto Sans", sans-serif; font-size: 31px; paint-order: stroke; stroke: rgba(255,255,255,.6); stroke-width: 4px; }
.air text { fill: #6b4fb0; font-style: italic; }
.lbl .res text { fill: #128012; font-style: italic; font-size: 34px; }
.ice text { fill: #3a87c4; font-style: italic; }
.town text { fill: #222; }
.road-sign rect { fill: #ecefdb; stroke: #c8c396; stroke-width: 3; }
.road-sign text { font-family: "Noto Sans", sans-serif; font-size: 29px; fill: #46461f; }
.zoom-ctl { position: absolute; left: 10px; top: 10px; width: 26px; height: 53px; border-radius: 4px; background: #fff; box-shadow: 0 1px 5px rgba(0,0,0,.65); display: flex; flex-direction: column; }
.zoom-ctl a { flex: 1; display: flex; align-items: center; justify-content: center; }
.zoom-ctl a:first-child { border-bottom: 1px solid #ccc; }
.attribution { position: absolute; right: 0; bottom: 0; height: 15px; line-height: 16px; padding: 0 5px; background: rgba(255,255,255,.7); font-family: "Liberation Sans", sans-serif; font-size: 11px; color: #333; white-space: nowrap; }
.attribution a { color: #0078a8; }
```

FILE: app.js
```js
const runs = [
  ['2019-03-10', '67 km', '2734 m', '5h 56m', '67 km/h', ''],
  ['2019-03-11', '28 km', '2876 m', '4h 1m', '44 km/h', 'card-alt'],
  ['2019-03-12', '83 km', '2877 m', '7h 31m', '70 km/h', ''],
  ['2019-03-13', '79 km', '3254 m', '6h 57m', '70 km/h', 'card-alt'],
  ['2019-03-14', '65 km', '3026 m', '6h 2m', '79 km/h', 'card-selected'],
  ['2019-03-15', '34 km', '2547 m', '3h 53m', '59 km/h', ''],
  ['2020-03-08', '75 km', '3245 m', '6h 21m', '79 km/h', ''],
  ['2020-03-09', '74 km', '2888 m', '6h 26m', '73 km/h', 'card-alt'],
  ['2020-03-10', '', '', '', '', 'card-new']
];
document.getElementById('cards').innerHTML = runs.map(([d, km, h, t, s, cls]) =>
  `<article class="card ${cls}"><div class="card-head"><span>Date:</span><span>${d}</span></div>
  <div class="card-grid"><span>${km && 'Route:'}</span><b>${km}</b><span>${km && 'Height:'}</span><b>${h}</b>
  <span>${km && 'Time:'}</span><b>${t}</b><span>${km && 'Speed:'}</span><b>${s}</b></div></article>`).join('');

const stats = [
  ['Total time:', '6:2', '[h]'], ['Time down/up/rest:', '1:57, 1:44, 2:21', '[h]'],
  ['Total distance:', '65.15', '[km]'], ['Distance down/up:', '40.75, 24.48', '[km]'],
  ['Max speed:', '79', '[km/h]'], ['Average speed:', '21', '[km/h]'],
  ['Max altitude:', '3026', '[m]'], ['Min altitude:', '1711', '[m]'],
  ['Downhill/uphill:', '13, 13', ''], ['Level diff down/up:', '6.8, 6.8', '[km]']
];
document.getElementById('stats').innerHTML =
  '<colgroup><col class="c1"><col class="c2"><col class="c3"></colgroup><tr class="big"><td>Date:</td><td colspan="2">2019-03-14</td></tr>' +
  stats.map(r => '<tr>' + r.map(c => `<td>${c}</td>`).join('') + '</tr>').join('');

// Profiles are stored in thirds of a pixel; the baseline is y = 853.
const series = [
  ['2020-03-08', '#4169e1', '224,328 235,343 247,388 256,412 262,448 270,465 280,485 288,510 298,536 304,510 312,445 320,400 327,370 332,388 340,425 350,450 360,465 368,410 375,340 382,260 389,224 398,245 402,275 410,290 413,328 420,340 425,372 432,395 440,440 447,470 455,455 465,505 477,536 488,500 495,430 503,415 511,428 520,400 530,330 541,268 550,310 563,380 572,390 580,445 588,458 598,430 610,390 616,350 621,337 630,365 640,400 650,445 662,470 674,487 683,470 690,420 700,385 706,440 713,465 720,480 729,460 738,400 745,355 751,346 762,360 768,400 777,440 785,470 799,495 809,455 820,415 834,370 840,320 846,294 857,315 870,360 880,420 898,460 908,420 912,425 922,380 929,355 932,360 938,335 947,295 953,247 958,247 966,295 980,355 997,410 1002,440 1020,470 1038,500 1044,490 1054,445 1060,440 1069,395 1077,415 1084,450 1098,480 1106,450 1112,415 1119,400 1126,350 1131,325 1140,345 1150,390 1162,425 1174,475 1192,515 1205,550 1219,608 1229,570 1236,480 1245,466 1257,500 1272,540 1285,565 1303,608'],
  ['2019-03-10', '#9400d3', '228,600 233,560 238,500 248,460 258,478 265,500 275,560 298,607 305,590 315,510 324,467 335,485 350,520 365,545 380,575 397,604 407,570 413,510 421,467 430,470 438,445 442,400 448,365 460,400 479,478 490,460 495,400 500,367 508,385 518,430 540,486 550,460 560,400 572,366 580,390 592,412 602,440 612,530 625,560 635,600 648,640 655,600 665,510 680,545 700,590 710,620 720,670 730,685 744,718 752,680 760,600 768,552 775,570 783,580 790,540 797,490 805,445 816,470 822,510 835,557 844,535 850,480 858,440 872,465 884,485 897,540 912,580 920,615 927,580 939,510 950,480 959,450 967,480 980,535 992,585 1002,608 1010,570 1020,520 1032,485 1039,452 1052,480 1067,510 1087,535 1107,570 1124,630 1137,650 1148,680 1157,660 1165,610 1170,585 1175,574 1182,590 1190,610'],
  ['2019-03-12', '#ffa07a', '224,610 245,605 262,590 270,488 282,480 288,410 295,368 305,390 315,410 322,470 335,485 345,430 357,385 367,364 375,385 385,440 405,510 420,550 432,590 447,625 453,654 460,630 467,650 475,745 483,819 490,750 497,670 505,590 512,450 520,380 525,362 540,405 552,460 562,510 585,590 600,640 620,687 632,630 645,642 655,590 665,530 675,515 690,545 710,590 727,624 735,595 745,580 752,557 767,570 782,520 792,490 802,520 817,570 832,600 844,620 854,590 864,570 880,535 889,480 895,390 904,372 917,385 927,435 942,470 949,510 957,470 965,390 970,375 980,380 992,420 1005,480 1024,540 1040,590 1054,615 1062,650 1074,675 1083,705 1090,670 1097,590 1107,550 1120,580 1132,540 1138,460 1142,445 1146,462 1149,443 1162,475 1187,515 1207,550 1229,605 1237,560 1246,538 1254,560 1264,610 1272,570 1280,535 1287,535 1294,480 1302,420 1310,360 1320,327 1330,345 1339,370 1350,440 1362,490 1372,550 1386,611 1394,570 1403,535 1412,560 1418,595 1423,600'],
  ['2019-03-14', '#ff0000', '224,608 240,608 243,618 250,600 257,578 262,600 270,590 273,575 277,595 286,455 300,432 310,410 317,406 327,430 338,468 352,490 362,450 372,397 382,415 398,457 408,420 418,370 425,330 431,312 434,325 439,280 447,305 455,350 465,390 480,450 498,480 520,520 535,575 548,603 556,560 563,520 570,450 577,418 590,440 605,500 615,532 622,500 630,430 636,400 642,372 650,410 660,465 676,536 685,500 693,430 700,415 715,440 735,475 755,530 770,560 785,604 793,560 802,480 810,430 814,413 822,435 834,470 842,515 857,545 880,600 902,625 917,652 922,620 930,600 940,608 947,560 955,535 962,550 969,590 976,600 984,570 989,490 996,465 1005,490 1017,550 1029,605 1037,550 1045,490 1052,473 1062,490 1072,540 1086,608 1095,540 1105,500 1112,473 1122,485 1135,540 1152,575 1167,608'],
  ['2019-03-15', '#ff00ff', '224,612 230,680 237,742 245,640 250,600 258,608 265,560 275,532 285,575 298,607 310,640 320,600 330,575 340,500 350,430 356,415 365,445 380,485 390,530 402,600 410,590 420,510 430,470 438,490 447,455 455,400 463,371 475,400 490,455 500,490 510,560 523,604 533,560 540,500 548,470 560,500 575,540 590,580 603,607 612,607 620,520 632,475 642,487 650,440 658,380 665,371 675,410 690,490 702,540 716,600']
];
const X0 = 310.5, X1 = 720.5, Y0 = 451.5, Y1 = 684.5;
let svg = `<text x="485.500" y="435" text-anchor="middle" style="font-size:17px" textLength="237">Chart of altitude versus distance</text><rect x="${X0}" y="${Y0}" width="410" height="233" fill="#f3f3f3"/>`;
for (let i = 0; i <= 17; i++) {
  const x = X0 + i * (X1 - X0) / 17;
  svg += `<path d="M${x} ${Y0}V${Y1}" stroke="#dcdcdc" stroke-dasharray="4 2"/><path d="M${x} ${Y1}v8" stroke="#bbb"/><text class="tick" x="${x - .5}" y="706" text-anchor="middle">${i * 5}</text>`;
}
['3 500', '3 000', '2 500', '2 000', '1 500', '1 000'].forEach((t, i) => {
  const y = Y0 + i * (Y1 - Y0) / 5;
  svg += `<path d="M${X0} ${y}H${X1}" stroke="#dcdcdc" stroke-dasharray="4 2"/><path d="M${X0 - 8} ${y}h8" stroke="#bbb"/><text class="tick" x="300" y="${y + 4}" text-anchor="end" textLength="24">${t}</text>`;
});
svg += '<g transform="translate(236 400) scale(.33333)">';
for (const [, color, pts] of series) {
  const p = pts.split(' '), a = p[0].split(',')[0], b = p[p.length - 1].split(',')[0];
  svg += `<polygon points="${a},853 ${pts} ${b},853" fill="${color}" fill-opacity=".2"/><polyline points="${pts}" fill="none" stroke="${color}" stroke-width="4"/>`;
}
svg += `</g><path d="M${X0} ${Y0}V${Y1}H${X1}" fill="none" stroke="#bbb"/>
<text x="515" y="726" text-anchor="middle" textLength="71">Distance [km]</text>
<text transform="translate(268 567) rotate(-90)" text-anchor="middle" textLength="63">Altitude [m]</text>`;
document.getElementById('chart').innerHTML = svg;
document.getElementById('legend').innerHTML = series.map(([n, c]) => `<span><i style="border-color:${c}"></i>${n}</span>`).join('');

const scree = 'M1150 1230l80-20 60 20 40 40 40-10 60 60-60 60 20 60-20 80-50-60-50 0-30-130-60-20-40-40zM1190 990l50-10 60 60-40 60-50-60zM-20 830l20-70 50-40 10 30-30 90zM1260 1430l40-10 20 80-60 20zM1540 1220l40-10 10 60-50-20zM1350 1550l60-30 0-30-60 30zM190 1935l30 20 10 60-25 90-20-60-40-60zM1300 1780l50-60 30 60-20 80 30 60-60-10-60-80zM1290 2060l50-40 40-70 10 60-50 80zM1120 1700l20 120-40 40-10-100zM1200 680l60-10 40-40 60 10-60 60-70 20zM1500 670l60-10 10 80-50 60zM1440 620l50-10 20 30-60 20zM1510 190l60 10 60 60-60 0-60-40zM920 290l90-10 20 60-100 20zM1020 1460l60 0 0 90-50-10zM1050 1620l30-20 30 110-20 40zM860 1395l80 60 30 40-30 0z';
document.getElementById('scree-fields').innerHTML = `<path d="${scree}" fill="#efe5dc"/><path d="${scree}" fill="url(#scree)"/>`;

const peaks = [[345,467],[470,665],[537,823],[573,899],[618,955],[137,1271],[5,1395],[97,1643],[461,1856],[101,1970],[195,2064],[320,2207],[560,2067],[732,1380],
  [1569,120],[957,503],[984,584],[1034,593],[1190,938],[972,1247],[1358,1446],[1293,1472],[1304,1525],[1020,1560],[1244,1590],[1112,1842],[1044,1874],[1029,1908],
  [1160,1926],[1200,1908],[1244,1905],[1557,1965],[987,2046],[989,2124],[939,2183],[1587,2212]];
document.getElementById('peaks').innerHTML = peaks.map(([x, y]) => `<use href="#peak" x="${x}" y="${y}"/>`).join('');
```
